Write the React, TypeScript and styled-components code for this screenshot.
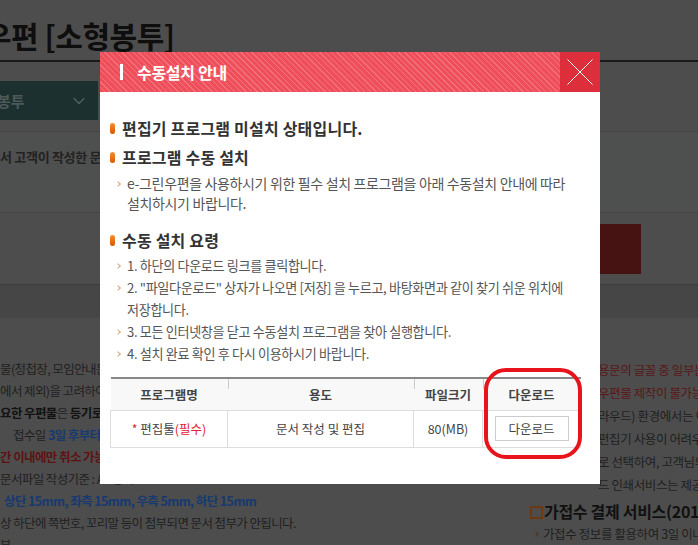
import React from "react";
import styled, { createGlobalStyle } from "styled-components";
import { ChevronDown } from "lucide-react";

const GlobalStyle = createGlobalStyle`
  html, body {
    margin: 0;
    padding: 0;
    background: #4d4d4d;
    overflow: hidden;
  }
  body {
    font-family: "Noto Sans CJK KR", "Noto Sans", sans-serif;
  }
  * {
    box-sizing: border-box;
  }
`;

function App() {
  return (
    <>
      <GlobalStyle />
      <Page>
        <TitleBar>
          <PageTitle>우편 [소형봉투]</PageTitle>
        </TitleBar>
        <Nav>
          <NavTab>
            봉투
            <ChevronDown size={20} strokeWidth={1.6} color="#56605f" />
          </NavTab>
        </Nav>
        <InfoRow>
          <InfoText>서 고객이 작성한 문서를 인쇄하여 우편물로 발송합니다.</InfoText>
        </InfoRow>
        <FormRow>
          <DimButton />
        </FormRow>
        <Band />
        <Columns>
          <Column>
            <Line>물(청첩장, 모임안내문 등)의 발송에 적합합니다.</Line>
            <Line>에서 제외)을 고려하여 작성하시기 바랍니다.</Line>
            <Line>
              <b>요한 우편물</b>은 <b>등기로</b> 발송하시기 바랍니다.
            </Line>
            <Line $indent={13}>
              접수일 <Blue>3일 후부터</Blue> 발송됩니다.
            </Line>
            <Line>
              <Red>간 이내에만 취소 가능</Red>합니다.
            </Line>
            <Line>문서파일 작성기준 : A4 용지</Line>
            <Line $indent={4}>
              <Blue>상단 15mm, 좌측 15mm, 우측 5mm, 하단 15mm</Blue>
            </Line>
            <Line>상 하단에 쪽번호, 꼬리말 등이 첨부되면 문서 첨부가 안됩니다.</Line>
            <Line>부</Line>
          </Column>
          <Column>
            <SideLine $tone="red">용문의 글꼴 중 일부는 지원되지 않아</SideLine>
            <SideLine $tone="red">우편물 제작이 불가능할 수 있습니다.</SideLine>
            <SideLine>라우드) 환경에서는 이용이 제한됩니다.</SideLine>
            <SideLine>편집기 사용이 어려우므로</SideLine>
            <SideLine>로 선택하여, 고객님의 문서를</SideLine>
            <SideLine>드 인쇄서비스는 제공되지 않습니다.</SideLine>
            <SideHeading>가접수 결제 서비스(2017년)</SideHeading>
            <SideItem>가접수 정보를 활용하여 3일 이내 결제</SideItem>
          </Column>
        </Columns>
      </Page>

      <Modal>
        <ModalHeader>
          <TitleMark />
          <ModalTitle>수동설치 안내</ModalTitle>
          <CloseButton aria-label="닫기">
            <svg width="40" height="40" viewBox="0 0 40 40">
              <path d="M7.5 7.5 L32.5 32.5 M32.5 7.5 L7.5 32.5" stroke="#fff" strokeWidth="1" />
            </svg>
          </CloseButton>
        </ModalHeader>
        <ModalBody>
          <Heading $gap={0}>편집기 프로그램 미설치 상태입니다.</Heading>
          <Heading $gap={7}>프로그램 수동 설치</Heading>
          <List $gap={5} $lineHeight={20} $size={14}>
            <Item>
              e-그린우편을 사용하시기 위한 필수 설치 프로그램을 아래 수동설치 안내에 따라
              <br />
              설치하시기 바랍니다.
            </Item>
          </List>
          <Heading $gap={16}>수동 설치 요령</Heading>
          <List $gap={4} $lineHeight={22} $size={13.1}>
            <Item>1. 하단의 다운로드 링크를 클릭합니다.</Item>
            <Item>
              2. "파일다운로드" 상자가 나오면 [저장] 을 누르고, 바탕화면과 같이 찾기 쉬운 위치에
              <br />
              저장합니다.
            </Item>
            <Item>3. 모든 인터넷창을 닫고 수동설치 프로그램을 찾아 실행합니다.</Item>
            <Item>4. 설치 완료 확인 후 다시 이용하시기 바랍니다.</Item>
          </List>
          <Table>
            <colgroup>
              <col style={{ width: 117 }} />
              <col style={{ width: 186 }} />
              <col style={{ width: 69 }} />
              <col style={{ width: 98 }} />
            </colgroup>
            <thead>
              <tr>
                <Th>프로그램명</Th>
                <Th>용도</Th>
                <Th>파일크기</Th>
                <Th>다운로드</Th>
              </tr>
            </thead>
            <tbody>
              <tr>
                <Td>
                  <Required>*</Required> 편집툴<Required>(필수)</Required>
                </Td>
                <Td>문서 작성 및 편집</Td>
                <Td>80(MB)</Td>
                <Td>
                  <DownloadButton>다운로드</DownloadButton>
                </Td>
              </tr>
            </tbody>
          </Table>
        </ModalBody>
        <Highlight />
      </Modal>
    </>
  );
}

export default App;

/* dimmed page behind the popup */

const Page = styled.div`
  width: 698px;
  height: 545px;
  overflow: hidden;
  background: #4d4d4d;
  color: #1f1f1f;
`;

const TitleBar = styled.div`
  height: 62px;
  padding-top: 14px;
  border-bottom: 2px solid #1a1a1a;
`;

const PageTitle = styled.h1`
  margin: 0 0 0 -16px;
  font-size: 30px;
  line-height: 42px;
  font-weight: 700;
  color: #0e0e0e;
  letter-spacing: -0.5px;
  white-space: nowrap;
`;

const Nav = styled.nav`
  display: flex;
  height: 39px;
  margin-top: 19px;
`;

const NavTab = styled.div`
  width: 101px;
  margin-left: -3px;
  padding-right: 9px;
  display: flex;
  align-items: center;
  justify-content: space-between;
  background: #1b302f;
  color: #4e5a59;
  font-size: 15px;
  font-weight: 700;
`;

const InfoRow = styled.div`
  height: 82px;
  margin-top: 11px;
  padding-top: 15px;
  border-top: 1px solid #444;
  border-bottom: 1px solid #444;
  background: #4e4f4f;
`;

const InfoText = styled.p`
  margin: 0;
  font-size: 13px;
  line-height: 20px;
  font-weight: 700;
  color: #222;
  letter-spacing: -0.3px;
  white-space: nowrap;
`;

const FormRow = styled.div`
  height: 71px;
  padding: 11px 57px 0 0;
  display: flex;
  justify-content: flex-end;
  align-items: flex-start;
`;

const DimButton = styled.div`
  width: 100px;
  height: 50px;
  background: #471212;
`;

const Band = styled.div`
  height: 34px;
  border-top: 1px solid #3c3c3c;
  background: #464646;
`;

const Columns = styled.div`
  display: grid;
  grid-template-columns: 520px 1fr;
  gap: 10px;
  padding-top: 40px;
`;

const Column = styled.div`
  min-width: 0;
  overflow: hidden;
`;

const Line = styled.p<{ $indent?: number }>`
  margin: 0;
  padding-left: ${(p) => p.$indent || 0}px;
  font-size: 12.5px;
  line-height: 22px;
  letter-spacing: -0.6px;
  white-space: nowrap;
  color: #1f1f1f;

  b {
    color: #111;
  }
`;

const Blue = styled.b`
  color: #163a70 !important;
`;

const Red = styled.b`
  color: #5e1313 !important;
`;

const SideLine = styled.p<{ $tone?: "red" }>`
  margin: 0;
  padding-left: 68px;
  font-size: 12.5px;
  line-height: 23px;
  letter-spacing: -0.4px;
  white-space: nowrap;
  color: ${(p) => (p.$tone === "red" ? "#5a1616" : "#1f1f1f")};
`;

const SideHeading = styled.h4`
  position: relative;
  margin: 3px 0 0;
  padding-left: 14px;
  font-size: 16px;
  line-height: 24px;
  font-weight: 700;
  color: #111;
  letter-spacing: -0.3px;
  white-space: nowrap;

  &::before {
    content: "";
    position: absolute;
    left: 0;
    top: 7px;
    width: 9px;
    height: 9px;
    border: 2px solid #6e3810;
  }
`;

const SideItem = styled.p`
  position: relative;
  margin: 0;
  padding-left: 13px;
  font-size: 12.5px;
  line-height: 22px;
  letter-spacing: -0.4px;
  white-space: nowrap;
  color: #1f1f1f;

  &::before {
    content: "";
    position: absolute;
    left: 4px;
    top: 9px;
    width: 3px;
    height: 3px;
    border-top: 1.5px solid #4a3525;
    border-right: 1.5px solid #4a3525;
    transform: rotate(45deg);
  }
`;

/* popup */

const Modal = styled.div`
  position: fixed;
  top: 52px;
  left: 100px;
  width: 500px;
  background: #fff;
`;

const ModalHeader = styled.div`
  height: 40px;
  display: flex;
  align-items: center;
  padding-left: 20px;
  background: repeating-linear-gradient(45deg, #ef4f5b 0 3px, #f3717a 3px 4px);
`;

const TitleMark = styled.span`
  width: 3px;
  height: 16px;
  background: #fff;
`;

const ModalTitle = styled.h2`
  margin: 0 0 0 14px;
  font-size: 16px;
  line-height: 20px;
  font-weight: 700;
  color: #fff;
  letter-spacing: -0.3px;
`;

const CloseButton = styled.button`
  margin-left: auto;
  width: 40px;
  height: 40px;
  padding: 0;
  border: 0;
  background: #dd2e3b;
  cursor: pointer;

  svg {
    display: block;
  }
`;

const ModalBody = styled.div`
  padding: 25px 20px 36px 10px;
`;

const Heading = styled.h3<{ $gap: number }>`
  position: relative;
  margin: ${(p) => p.$gap}px 0 0;
  padding-left: 12px;
  font-size: 16px;
  line-height: 22px;
  font-weight: 700;
  color: #333;
  letter-spacing: 0.2px;

  &::before {
    content: "";
    position: absolute;
    left: 0;
    top: 6px;
    width: 5px;
    height: 11px;
    border-radius: 3px;
    background: linear-gradient(#f5902f, #d85800);
  }
`;

const List = styled.ul<{ $gap: number; $lineHeight: number; $size: number }>`
  margin: ${(p) => p.$gap}px 0 0;
  padding: 0;
  list-style: none;
  font-size: ${(p) => p.$size}px;
  line-height: ${(p) => p.$lineHeight}px;
`;

const Item = styled.li`
  position: relative;
  padding-left: 17px;
  color: #555;
  letter-spacing: -0.35px;
  white-space: nowrap;

  &::before {
    content: "";
    position: absolute;
    left: 6px;
    top: 0.65em;
    width: 3px;
    height: 3px;
    border-top: 1.5px solid #dba57a;
    border-right: 1.5px solid #dba57a;
    transform: rotate(45deg);
  }
`;

const Table = styled.table`
  width: 470px;
  margin-top: 12px;
  border-collapse: collapse;
  table-layout: fixed;
  border-top: 2px solid #888;
  font-size: 12.5px;
  color: #444;
`;

const Th = styled.th`
  position: relative;
  height: 32px;
  padding: 0;
  background: #f8f8f8;
  border-bottom: 1px solid #ddd;
  font-weight: 700;
  text-align: center;

  & + &::before {
    content: "";
    position: absolute;
    left: 0;
    top: 0;
    width: 1px;
    height: 10px;
    background: #ccc;
  }
`;

const Td = styled.td`
  height: 37px;
  padding: 0;
  border: 1px solid #ddd;
  border-top: 0;
  text-align: center;
  white-space: nowrap;
`;

const Required = styled.span`
  color: #e0242e;
`;

const DownloadButton = styled.button`
  width: 74px;
  height: 25px;
  padding: 0;
  border: 1px solid #ccc;
  background: #fff;
  font-family: inherit;
  font-size: 12.5px;
  color: #444;
  cursor: pointer;
`;

const Highlight = styled.div`
  position: absolute;
  left: 384px;
  top: 316px;
  width: 98px;
  height: 91px;
  border: 4px solid #e8141c;
  border-radius: 22px;
  pointer-events: none;
`;
